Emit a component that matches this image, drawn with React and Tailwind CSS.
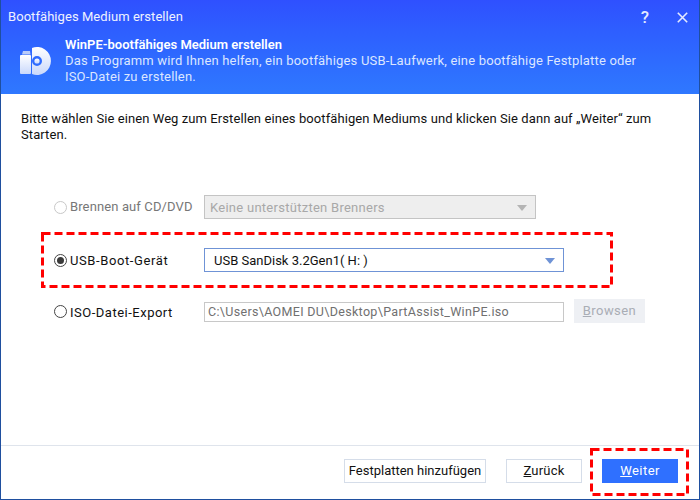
import React from 'react';

const font = "font-['Roboto','Liberation_Sans',sans-serif]";

function Radio({ checked, disabled }) {
    return (
        <span className={`flex h-[13px] w-[13px] shrink-0 items-center justify-center rounded-full border bg-white ${disabled ? 'border-[#c8c8c8]' : 'border-[#444444]'}`}>
            {checked && <span className="h-[7px] w-[7px] rounded-full bg-[#3a3a3a]" />}
        </span>
    );
}

function Caret({ color }) {
    return (
        <svg width="10" height="6" viewBox="0 0 10 6" className="shrink-0">
            <path d="M0 0H10L5 6Z" fill={color} />
        </svg>
    );
}

function MediaIcon() {
    return (
        <svg width="34" height="30" viewBox="0 0 34 30">
            <defs>
                <linearGradient id="mediaFill" x1="0" y1="0" x2="0" y2="1">
                    <stop offset="0" stopColor="#ffffff" />
                    <stop offset="1" stopColor="#c9d8fb" />
                </linearGradient>
            </defs>
            <path fillRule="evenodd" d="M13 1.9A14 14 0 1 1 13 28.1ZM23 15a5 5 0 1 0-10 0a5 5 0 1 0 10 0Z" fill="url(#mediaFill)" />
            <circle cx="18" cy="15" r="2.6" fill="url(#mediaFill)" />
            <path d="M3 8.5L4 5H11L11.5 8.5Z" fill="#b9cbf8" />
            <rect x="1" y="9" width="11" height="19" rx="1" fill="url(#mediaFill)" />
        </svg>
    );
}

// red dashed annotation drawn over the screenshot
function DashedMark({ className, width, height }) {
    return (
        <svg className={`absolute ${className}`} width={width} height={height} viewBox={`0 0 ${width} ${height}`}>
            <rect x="1.5" y="1.5" width={width - 3} height={height - 3} fill="none" stroke="#ff0000" strokeWidth="3" strokeDasharray="8 4" />
        </svg>
    );
}

export default function App() {
    return (
        <div className={`${font} relative flex h-[500px] w-[700px] flex-col overflow-hidden border-x border-b border-[#1f4f9f] bg-white text-[13px] text-[#111111]`}>
            <div className="h-[94px] shrink-0 bg-gradient-to-b from-[#2f50ff] to-[#2f78ff] text-white">
                <div className="flex h-[34px] items-center justify-between pl-[7px] pr-[11px]">
                    <span className="text-[13px] tracking-[0.06px] text-[#eef2ff]">Bootfähiges Medium erstellen</span>
                    <div className="flex items-center gap-[28px]">
                        <span className="text-[17px] font-medium leading-none text-[#e4eaff]">?</span>
                        <svg width="11" height="11" viewBox="0 0 11 11">
                            <path d="M0.8 0.8L10.2 10.2M10.2 0.8L0.8 10.2" stroke="#e4eaff" strokeWidth="1.6" />
                        </svg>
                    </div>
                </div>
                <div className="flex pl-[18px]">
                    <div className="mt-[12px] w-[46px] shrink-0">
                        <MediaIcon />
                    </div>
                    <div className="mt-[3px] leading-[16px] tracking-[0.18px]">
                        <div className="font-semibold tracking-normal">WinPE-bootfähiges Medium erstellen</div>
                        <div className="text-[#dbe6ff]">Das Programm wird Ihnen helfen, ein bootfähiges USB-Laufwerk, eine bootfähige Festplatte oder</div>
                        <div className="text-[#dbe6ff]">ISO-Datei zu erstellen.</div>
                    </div>
                </div>
            </div>

            <div className="flex flex-1 flex-col">
                <p className="mt-[17px] pl-[20px] pr-[30px] leading-[16px] tracking-[0.08px]">
                    Bitte wählen Sie einen Weg zum Erstellen eines bootfähigen Mediums und klicken Sie dann auf „Weiter“ zum Starten.
                </p>

                <div className="mt-[52px] flex h-[24px] items-center pl-[53px]">
                    <Radio disabled />
                    <span className="ml-[3px] w-[134px] tracking-[0.12px] text-[#777777]">Brennen auf CD/DVD</span>
                    <div className="flex h-[24px] w-[332px] items-center justify-between border border-[#c4c4c4] bg-[#eeeeee] pl-[5px] pr-[8px] pt-[1px] tracking-[0.27px] text-[#a8a8a8]">
                        <span>Keine unterstützten Brenners</span>
                        <Caret color="#b4b4b4" />
                    </div>
                </div>

                <div className="mt-[29px] flex h-[24px] items-center pl-[53px]">
                    <Radio checked />
                    <span className="ml-[3px] w-[134px] pt-[2px] tracking-[0.6px]">USB-Boot-Gerät</span>
                    <div className="flex h-[24px] w-[360px] items-center justify-between border border-[#6f93d6] bg-white pl-[9px] pr-[8px] pt-[2px]">
                        <span>USB SanDisk 3.2Gen1( H: )</span>
                        <Caret color="#6f93d6" />
                    </div>
                </div>

                <div className="mt-[27px] flex h-[24px] items-center pl-[53px]">
                    <Radio />
                    <span className="ml-[3px] w-[134px] pt-[3px] tracking-[0.5px]">ISO-Datei-Export</span>
                    <div className="mt-[2px] flex h-[20px] w-[360px] items-center border border-[#c8c8c8] bg-white pl-[3px] text-[12.5px] tracking-[0.32px] text-[#707070]">
                        C:\Users\AOMEI DU\Desktop\PartAssist_WinPE.iso
                    </div>
                    <div className="ml-[10px] flex h-[24px] w-[71px] items-center justify-center bg-[#eef0f4] tracking-[0.45px] text-[#a9adb5]">
                        <span><span className="underline">B</span>rowsen</span>
                    </div>
                </div>

                <div className="mt-auto flex h-[54px] items-start border-t border-[#dfe4ec] pr-[21px] pt-[13px]">
                    <div className="ml-auto flex h-[24px] w-[142px] items-center justify-center border border-[#d5dde9] bg-white">
                        Festplatten hinzufügen
                    </div>
                    <div className="ml-[20px] flex h-[24px] w-[76px] items-center justify-center border border-[#d5dde9] bg-white tracking-[0.2px]">
                        <span><span className="underline">Z</span>urück</span>
                    </div>
                    <div className="ml-[20px] flex h-[24px] w-[76px] items-center justify-center bg-[#2f70ff] tracking-[0.45px] text-white">
                        <span><span className="underline">W</span>eiter</span>
                    </div>
                </div>
            </div>

            <DashedMark className="left-[40px] top-[232px]" width={572} height={56} />
            <DashedMark className="left-[589px] top-[448px]" width={99} height={48} />
        </div>
    );
}
